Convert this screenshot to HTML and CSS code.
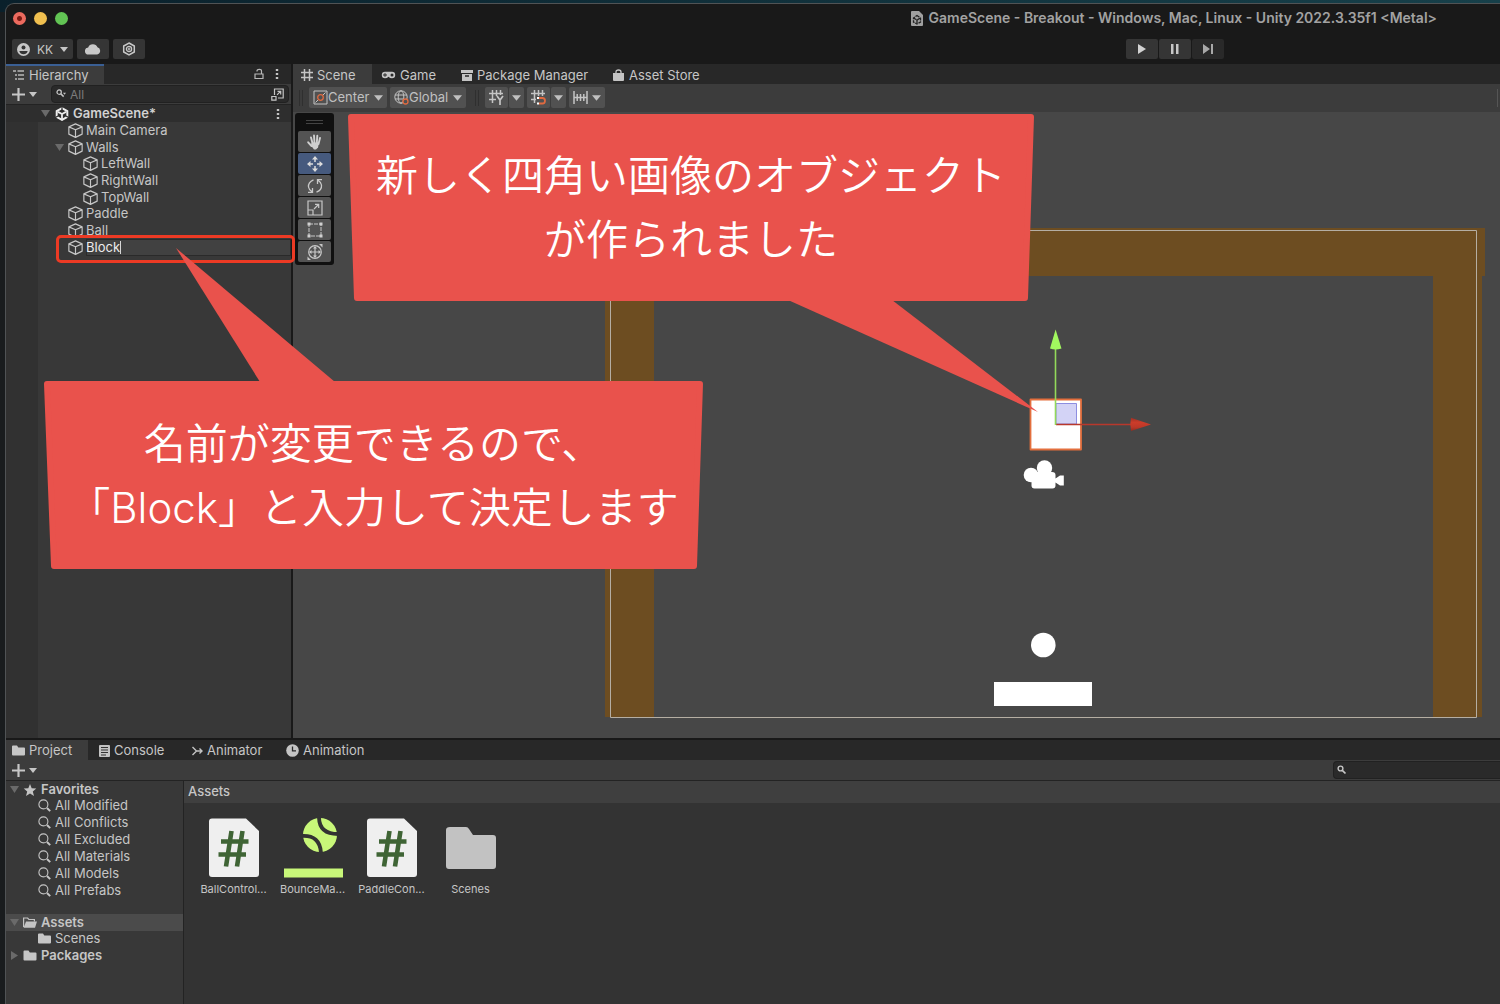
FILE: index.html
```html
<!DOCTYPE html>
<html lang="ja">
<head>
<meta charset="utf-8">
<meta name="viewport" content="width=device-width, initial-scale=1">
<title>GameScene - Breakout - Unity</title>
<link rel="stylesheet" href="styles.css">
</head>
<body>
<svg class="sprite" aria-hidden="true">
  <symbol id="caret" viewBox="0 0 8 5"><path d="M0 0h8L4 5z" fill="currentColor"/></symbol>
  <symbol id="cube" viewBox="0 0 14 14"><path d="M7 .8 13.200 3.600v6.800L7 13.400.8 10.400V3.600zM.8 3.600 7 6.300l6.200-2.700M7 6.300v7" fill="none" stroke="currentColor" stroke-width="1.100" stroke-linejoin="round"/></symbol>
  <symbol id="unity" viewBox="0 0 14 14"><path d="M7 1.200 12.300 4v6L7 12.900 1.700 10V4z" fill="none" stroke="currentColor" stroke-width="2"/><path d="M3 4.900 7 7l4-2.100M7 7v5" fill="none" stroke="currentColor" stroke-width="1.800"/><path d="M7 0v3.500M0 10.800l3-1.700M14 10.800l-3-1.700" stroke="#2e2e2e" stroke-width="1.200"/></symbol>
  <symbol id="plus" viewBox="0 0 12 12"><path d="M6 0v12M0 6h12" stroke="currentColor" stroke-width="2"/></symbol>
  <symbol id="dots" viewBox="0 0 4 12"><path d="M.8 1h2.400v2H.8zM.8 5h2.400v2H.8zM.8 9h2.400v2H.8z" fill="currentColor"/></symbol>
  <symbol id="search" viewBox="0 0 10 10"><circle cx="3.500" cy="3.500" r="2.400" fill="none" stroke="currentColor" stroke-width="1.400"/><path d="M5.300 5.300 8.500 8.500" stroke="currentColor" stroke-width="1.700"/></symbol>
  <symbol id="lens" viewBox="0 0 13 13"><circle cx="5.400" cy="5.400" r="4.500" fill="none" stroke="currentColor" stroke-width="1.100"/><path d="m9 9 3.200 3.200" stroke="currentColor" stroke-width="1.900"/></symbol>
  <symbol id="folder" viewBox="0 0 13 11"><path d="M0 1.500Q0 .5 1 .5h4l1.300 2H12q1 0 1 1v6q0 1-1 1H1q-1 0-1-1z" fill="currentColor"/></symbol>
  <symbol id="gridline" viewBox="0 0 12 12"><path d="M3.500 0v12M8.500 0v12M0 3.500h12M0 8.500h12" stroke="currentColor" stroke-width="1.500"/></symbol>
  <symbol id="script" viewBox="0 0 60 60"><path d="M8 .5h34L55 13v43q0 3-3 3H8q-3 0-3-3V3.500Q5 .5 8 .5z" fill="#efefef"/><path d="M27.500 13 22 48.500M38.500 13 33 48.500M17 23.500h27.500M14.500 36.500H42" stroke="#3f6435" stroke-width="4.600"/></symbol>
</svg>

<div class="desktop">
<div class="window">
  <header class="titlebar">
    <div class="lights">
      <button class="light light-close" aria-label="Close"></button>
      <button class="light light-min" aria-label="Minimize"></button>
      <button class="light light-max" aria-label="Zoom"></button>
    </div>
    <h1 class="title">
      <svg width="12" height="15" viewBox="0 0 12 15"><path d="M1 0h7l4 4v10q0 1-1 1H1q-1 0-1-1V1q0-1 1-1z" fill="#a0a0a0"/><path d="M6 4.500 9.500 7v4L6 13 2.500 11V7zM3 7.200 6 9l3-1.800M6 9v3.500" fill="none" stroke="#222" stroke-width="1.300" stroke-dasharray="3 .8"/></svg>
      <span>GameScene - Breakout - Windows, Mac, Linux - Unity 2022.3.35f1 &lt;Metal&gt;</span>
    </h1>
  </header>

  <div class="topbar">
    <div class="account">
      <button class="btn btn-user">
        <svg width="13" height="13" viewBox="0 0 13 13"><circle cx="6.500" cy="6.500" r="6.500" fill="#c8c8c8"/><circle cx="6.500" cy="4.500" r="2" fill="#353535"/><path d="M2.300 8h8.400q-1 3.200-4.200 3.200T2.300 8z" fill="#353535"/></svg>
        <span>KK</span>
        <svg width="8" height="5"><use href="#caret"/></svg>
      </button>
      <button class="btn btn-cloud" aria-label="Cloud"><svg width="16" height="12" viewBox="0 0 16 12"><path d="M3.700 11.500a3.500 3.500 0 0 1-.5-7A5 5 0 0 1 12.500 4.300a3.700 3.700 0 0 1-.4 7.200z" fill="#c8c8c8"/></svg></button>
      <button class="btn btn-hex" aria-label="Version control"><svg width="14" height="14" viewBox="0 0 14 14" fill="none" stroke="#c8c8c8"><path d="M7 1l5.300 3v6L7 13l-5.300-3V4z" stroke-width="1.500"/><circle cx="7" cy="7" r="2.600" stroke-width="1.300"/><path d="M6.400 6h1.300v2H6.400z" stroke-width=".8"/></svg></button>
    </div>
    <div class="playback">
      <button class="btn" aria-label="Play"><svg width="10" height="12"><path d="M1 1v10l8-5z" fill="#d2d2d2"/></svg></button>
      <button class="btn" aria-label="Pause"><svg width="10" height="12"><path d="M1 1h2.500v10H1zM6 1h2.500v10H6z" fill="#c8c8c8"/></svg></button>
      <button class="btn btn-dim" aria-label="Step"><svg width="11" height="12"><path d="M0 1v10l7-5zM8 1h2v10H8z" fill="#a8a8a8"/></svg></button>
    </div>
  </div>

  <main class="workspace">
    <section class="panel hierarchy">
      <nav class="tabs">
        <a href="#" class="tab tab-active tab-focus"><svg width="12" height="10" viewBox="0 0 12 10"><path d="M0 1h3M4.500 1H11M2 5h2M5 5h6M2 9h2M5 9h6" stroke="#b8b8b8" stroke-width="1.400"/></svg>Hierarchy</a>
        <span class="tab-tools">
          <svg width="10" height="12" viewBox="0 0 10 12"><path d="M1 6h8v4.500H1zM3 3.500V3q0-1.700 2.300-1.700T7.500 3v3" fill="none" stroke="#b8b8b8" stroke-width="1.200"/></svg>
          <svg class="soft" width="4" height="12"><use href="#dots"/></svg>
        </span>
      </nav>
      <div class="panelbar">
        <button class="add" aria-label="Create"><svg width="13" height="13"><use href="#plus"/></svg><svg width="8" height="5"><use href="#caret"/></svg></button>
        <label class="searchbox"><svg width="10" height="10" viewBox="0 0 10 10"><use href="#search" width="9" height="9"/><path d="M7 3.800h3l-1.500 2z" fill="currentColor"/></svg><input type="search" placeholder="All" aria-label="Search hierarchy"><svg class="popout" width="13" height="13" viewBox="0 0 13 13"><path d="M3.500 7V1h8.700v9H7M.8 8.500H5v3.700H.8zM6 6.800l3.500-3.500M6.500 3.300h3.200v3.200" fill="none" stroke="currentColor" stroke-width="1.200"/></svg></label>
      </div>
      <div class="tree-wrap">
        <div class="scene-row"><svg class="fold" width="9" height="7"><path d="M0 0h9L4.500 7z" fill="#6a6a6a"/></svg><svg class="bright" width="14" height="14"><use href="#unity"/></svg><b>GameScene*</b><svg class="soft push" width="4" height="12"><use href="#dots"/></svg></div>
        <ul class="tree">
          <li class="row"><svg class="cube"><use href="#cube"/></svg>Main Camera</li>
          <li class="row row-open"><svg class="fold" width="9" height="7"><path d="M0 0h9L4.500 7z" fill="#6a6a6a"/></svg><svg class="cube"><use href="#cube"/></svg>Walls</li>
          <li>
            <ul class="subtree">
              <li class="row"><svg class="cube"><use href="#cube"/></svg>LeftWall</li>
              <li class="row"><svg class="cube"><use href="#cube"/></svg>RightWall</li>
              <li class="row"><svg class="cube"><use href="#cube"/></svg>TopWall</li>
            </ul>
          </li>
          <li class="row"><svg class="cube"><use href="#cube"/></svg>Paddle</li>
          <li class="row"><svg class="cube"><use href="#cube"/></svg>Ball</li>
          <li class="row row-edit"><svg class="cube"><use href="#cube"/></svg><span class="rename"><input type="text" value="Block" aria-label="Object name"><i class="cursor"></i></span></li>
        </ul>
      </div>
    </section>

    <section class="panel scene">
      <nav class="tabs">
        <a href="#" class="tab tab-active tab-scene"><svg width="12" height="12"><use href="#gridline"/></svg>Scene</a>
        <a href="#" class="tab tab-game"><svg width="15" height="8" viewBox="0 0 15 8"><path d="M4 .8h7a3.200 3.200 0 0 1 0 6.400q-2 0-3.500-1.500Q6 7.200 4 7.200A3.200 3.200 0 0 1 4 .8z" fill="#c4c4c4"/><path d="M2 4h4M4 2.200v3.600" stroke="#282828"/><circle cx="11" cy="4" r="1.500" fill="#282828"/></svg>Game</a>
        <a href="#" class="tab tab-package"><svg width="12" height="11" viewBox="0 0 12 11"><path d="M0 0h12v3H0zM1 4h10v7H1z" fill="#c4c4c4"/><path d="M4 6h4" stroke="#282828" stroke-width="1.400"/></svg>Package Manager</a>
        <a href="#" class="tab tab-store"><svg width="11" height="12" viewBox="0 0 11 12"><path d="M0 4h11v7q0 1-1 1H1q-1 0-1-1z" fill="#c4c4c4"/><path d="M3 6V3q0-2 2.500-2T8 3v3" fill="none" stroke="#c4c4c4" stroke-width="1.300"/></svg>Asset Store</a>
      </nav>
      <div class="scenebar">
        <i class="grip"></i>
        <button class="tool tool-center"><svg width="15" height="15" viewBox="0 0 15 15" fill="none"><path d="M1 1h13v13H1z" stroke="#c4c4c4"/><path d="m2.500 12.500 3-3M9.500 5.500l3-3" stroke="#c4c4c4"/><circle cx="7.500" cy="7.500" r="2.800" stroke="#e06a40" stroke-width="1.300"/></svg>Center<svg class="end" width="9" height="6"><use href="#caret"/></svg></button>
        <button class="tool tool-global"><svg width="15" height="15" viewBox="0 0 15 15" fill="none" stroke="#c4c4c4"><circle cx="7" cy="7" r="6.200"/><ellipse cx="7" cy="7" rx="2.800" ry="6.200"/><path d="M1 5h12M1 9h8"/><circle cx="11.500" cy="11.500" r="2.500" fill="#515151" stroke="#e06a40" stroke-width="1.300"/></svg>Global<svg class="end" width="9" height="6"><use href="#caret"/></svg></button>
        <i class="grip"></i>
        <span class="split"><button class="tool" aria-label="Grid"><svg width="15" height="15" viewBox="0 0 15 15" fill="none" stroke="#c4c4c4"><path d="M3.500 0v13M7.500 0v6M11.500 0v5M0 3.500h14M0 9.500h7" stroke-width="1.500"/><path d="m8 6 3 4 3-4M11 10v5" stroke-width="1.700"/></svg></button><button class="tool" aria-label="Grid options"><svg width="9" height="6"><use href="#caret"/></svg></button></span>
        <span class="split"><button class="tool" aria-label="Snap"><svg width="15" height="15" viewBox="0 0 15 15" fill="none" stroke="#c4c4c4"><path d="M3.500 0v13M7.500 0v6M11.500 0v6M0 3.500h14M0 9.500h5" stroke-width="1.500"/><path d="M8 8h3.500q2.500 0 2.500 2.700t-2.500 2.800H8" stroke="#e06a40" stroke-width="1.800"/><path d="M6 8h2M6 13.500h2" stroke="#fff" stroke-width="1.800"/></svg></button><button class="tool" aria-label="Snap options"><svg width="9" height="6"><use href="#caret"/></svg></button></span>
        <button class="tool tool-inc" aria-label="Increment snapping"><svg width="15" height="13" viewBox="0 0 15 13" stroke="#c4c4c4"><path d="M1 0v13M14 0v13M4.200 3v7M7.500 3v7M10.800 3v7M1 6.500h13" stroke-width="1.500"/></svg><svg width="9" height="6"><use href="#caret"/></svg></button>
        <i class="edge"></i>
      </div>
      <div class="view">
        <svg class="canvas" viewBox="293 112 1207 626" preserveAspectRatio="xMidYMid slice">
          <defs><linearGradient id="cone" x1="0" y1="0" x2="0" y2="1"><stop offset="0" stop-color="#9c3024"/><stop offset=".35" stop-color="#cc3c2a"/><stop offset=".7" stop-color="#bd3828"/><stop offset="1" stop-color="#902c20"/></linearGradient></defs>
          <path d="M605 228h880v48H605zM605 276h49v441h-49zM1433 276h49v441h-49z" fill="#6d4d21"/>
          <path d="M610.500 230.500h866v487h-866z" fill="none" stroke="#b5aea3"/>
          <path d="M1030.500 399.500h50.500v50h-50.500z" fill="#fff" stroke="#e36f3d" stroke-width="1.800" stroke-linejoin="round"/>
          <path d="M1056 403.500h20.500V424H1056z" fill="#d3d3f6" stroke="#8d8de0"/>
          <path d="M1056 424.500h76" stroke="#b8382c" stroke-width="1.500"/>
          <path d="M1131 417.800q-1.500 6.700 0 13.200l20-6.500z" fill="url(#cone)"/>
          <path d="M1055.500 425v-78" stroke="#93d95a" stroke-width="1.600"/>
          <path d="M1050 348.500q5.500 2 11.500 0l-5.900-19z" fill="#a2f75f"/>
          <g fill="#fff"><circle cx="1031" cy="475" r="7.300"/><circle cx="1044.500" cy="468" r="7.700"/><path d="M1034 472h18q3.500 0 3.500 3v3.500l4.500-3h3.800v10h-3.800l-4.500-3v3q0 3-3 3h-18q-3 0-3-3v-10z"/></g>
          <circle cx="1043.300" cy="645" r="12.300" fill="#fff"/>
          <path d="M994 682h98v24h-98z" fill="#fff"/>
        </svg>
        <div class="palette">
          <i class="palette-grip"></i>
          <button class="ptool" aria-label="Hand"><svg width="16" height="16" viewBox="0 0 16 16" fill="none" stroke="#d0d0d0" stroke-linecap="round"><path d="M4 3.500 5.500 9M7 1.500 7.500 9M10.300 1.800 9.800 9M13 4l-1.500 6M1.200 8.300 4.500 12" stroke-width="1.900"/><path d="M4.500 8.500h7.500l-1 5-2 2H7l-3-4z" fill="#d0d0d0" stroke="none"/></svg></button>
          <button class="ptool ptool-on" aria-label="Move"><svg width="16" height="16" viewBox="0 0 16 16"><path d="M8 0l3 3.500H5zM8 16l3-3.500H5zM0 8l3.500-3v6zM16 8l-3.500-3v6z" fill="#dcdcdc"/><path d="M8 3v3M8 10v3M3 8h3M10 8h3" stroke="#dcdcdc" stroke-width="1.500"/></svg></button>
          <button class="ptool" aria-label="Rotate"><svg width="16" height="16" viewBox="0 0 16 16" fill="none" stroke="#c8c8c8" stroke-width="1.300"><path d="M6.500 1.800Q1 4 1.500 9q.5 3 3.500 4.800M1 14.300h4.500V10M9.500 14.200Q15 12 14.500 7q-.5-3-3.500-4.800M15 1.700h-4.500V6"/></svg></button>
          <button class="ptool" aria-label="Scale"><svg width="16" height="16" viewBox="0 0 16 16" fill="none" stroke="#c8c8c8" stroke-width="1.200"><path d="M1 1h14v14H1zM1 10h5v5M7 9l4.500-4.500M8 4.300h3.700V8"/></svg></button>
          <button class="ptool" aria-label="Rect"><svg width="16" height="16" viewBox="0 0 16 16"><path d="M2 2h12v12H2z" fill="none" stroke="#c8c8c8" stroke-dasharray="4 1"/><path d="M.5.5h3v3h-3zM12.500.5h3v3h-3zM.5 12.500h3v3h-3zM12.500 12.500h3v3h-3z" fill="#d0d0d0"/></svg></button>
          <button class="ptool" aria-label="Transform"><svg width="18" height="18" viewBox="0 0 18 18" fill="none" stroke="#c8c8c8"><circle cx="9" cy="9" r="6.300" stroke-width="1.200"/><path d="M9 4v10M4 9h10" stroke-width="1.200"/><path d="M9 3l2 2.500H7zM9 15l2-2.500H7zM3 9l2.500-2v4zM15 9l-2.500-2v4z" fill="#c8c8c8" stroke="none"/><path d="M13 1h3.500v3.500zM1.500 13.500V17H5z" fill="#c8c8c8" stroke="none"/></svg></button>
        </div>
      </div>
    </section>
  </main>

  <section class="panel project">
    <nav class="tabs">
      <a href="#" class="tab tab-active tab-project"><svg width="13" height="11"><use href="#folder"/></svg>Project</a>
      <a href="#" class="tab tab-console"><svg width="11" height="12" viewBox="0 0 11 12"><rect width="11" height="12" rx="1" fill="#c4c4c4"/><path d="M2 2.500h7M2 5h7M2 7.500h7M2 10h5" stroke="#333"/></svg>Console</a>
      <a href="#" class="tab tab-animator"><svg width="11" height="10" viewBox="0 0 11 10" fill="none" stroke="#c4c4c4" stroke-width="1.400"><path d="m.5 1 4 4-4 4M4 5h6M7.500 2.500 10 5 7.500 7.500"/></svg>Animator</a>
      <a href="#" class="tab tab-animation"><svg width="13" height="13" viewBox="0 0 13 13"><circle cx="6.500" cy="6.500" r="6.300" fill="#c4c4c4"/><path d="M6.500 2.500v4.300H10" fill="none" stroke="#282828" stroke-width="1.300"/></svg>Animation</a>
    </nav>
    <div class="panelbar">
      <button class="add" aria-label="Create asset"><svg width="13" height="13"><use href="#plus"/></svg><svg width="8" height="5"><use href="#caret"/></svg></button>
      <label class="searchbox searchbox-project"><svg width="10" height="10"><use href="#search"/></svg><input type="search" aria-label="Search project"></label>
    </div>
    <div class="browser">
      <aside class="folders">
        <div class="frow frow-root"><svg width="9" height="7"><path d="M0 0h9L4.500 7z" fill="#6a6a6a"/></svg><svg class="ficon" width="13" height="12" viewBox="0 0 13 12"><path d="M6.500 0l1.700 4.200 4.600.3-3.500 2.900 1.200 4.500-4-2.500-4 2.500 1.200-4.500L.2 4.500l4.600-.3z" fill="#c4c4c4"/></svg><b>Favorites</b></div>
        <ul class="fsub">
          <li class="frow"><svg width="13" height="13"><use href="#lens"/></svg>All Modified</li>
          <li class="frow"><svg width="13" height="13"><use href="#lens"/></svg>All Conflicts</li>
          <li class="frow"><svg width="13" height="13"><use href="#lens"/></svg>All Excluded</li>
          <li class="frow"><svg width="13" height="13"><use href="#lens"/></svg>All Materials</li>
          <li class="frow"><svg width="13" height="13"><use href="#lens"/></svg>All Models</li>
          <li class="frow"><svg width="13" height="13"><use href="#lens"/></svg>All Prefabs</li>
        </ul>
        <div class="frow frow-root frow-on"><svg width="9" height="7"><path d="M0 0h9L4.500 7z" fill="#6a6a6a"/></svg><svg class="ficon" width="14" height="11" viewBox="0 0 14 11"><path d="M.6 10V1h4l1.300 1.500h5.500V4.500" fill="none" stroke="#c4c4c4" stroke-width="1.200"/><path d="M3 4.500h11L12 10.700H.6z" fill="#c4c4c4"/></svg><b>Assets</b></div>
        <ul class="fsub">
          <li class="frow"><svg width="13" height="11"><use href="#folder"/></svg>Scenes</li>
        </ul>
        <div class="frow frow-root"><svg width="9" height="9"><path d="M1 0v9l7-4.500z" fill="#6a6a6a"/></svg><svg class="ficon" width="13" height="11"><use href="#folder"/></svg><b>Packages</b></div>
      </aside>
      <div class="assets">
        <h2 class="crumb">Assets</h2>
        <ul class="asset-grid">
          <li class="asset"><svg width="60" height="60"><use href="#script"/></svg>BallControl...</li>
          <li class="asset"><svg width="60" height="60" viewBox="0 0 60 60"><circle cx="37" cy="17" r="17" fill="#c8f779"/><path d="M36 -1q0 17 19 17M19 18q18-1 19 17" fill="none" stroke="#333" stroke-width="3.800"/><path d="M1 50.500h59v9H1z" fill="#c8f779"/></svg>BounceMa...</li>
          <li class="asset"><svg width="60" height="60"><use href="#script"/></svg>PaddleCon...</li>
          <li class="asset"><svg width="60" height="60" viewBox="0 0 60 60"><path d="M9 9h16q2 0 3 2l4 6h20q3 0 3 3v28q0 3-3 3H8q-3 0-3-3V12q0-3 4-3z" fill="#c2c2c2"/></svg>Scenes</li>
        </ul>
      </div>
    </div>
  </section>
</div>
</div>

<div class="highlight"></div>
<div class="callout callout-top">
  <svg width="700" height="310" viewBox="0 0 700 310"><path d="M3 3h680l-6 181H9z" stroke="#e9524c" stroke-width="6" stroke-linejoin="round"/><path d="M440 186h104l146 112z"/></svg>
  <p>新しく四角い画像のオブジェクト<br>が作られました</p>
</div>
<div class="callout callout-bottom">
  <svg width="660" height="189" viewBox="0 0 660 189"><path d="M3 3h653l-6 182H10z" stroke="#e9524c" stroke-width="6" stroke-linejoin="round"/><path d="M216 1h75L132-133z"/></svg>
  <p>名前が変更できるので、<br>「<span class="latin">Block</span>」と入力して決定します</p>
</div>
</body>
</html>
```
FILE: styles.css
```css
* { box-sizing: border-box; }
body {
  margin: 0;
  background: #191c1e;
  color: #c6c6c6;
  font: 13px/17px Inter, "Liberation Sans", sans-serif;
  overflow-x: hidden;
}
ul { list-style: none; margin: 0; padding: 0; }
button, input { font: inherit; color: inherit; border: 0; padding: 0; margin: 0; background: none; }
button { display: flex; align-items: center; justify-content: center; }
input { min-width: 0; outline: 0; }
a { color: inherit; text-decoration: none; }
svg { flex: none; display: block; }
.sprite { position: absolute; width: 0; height: 0; }

.desktop {
  min-height: 100vh;
  padding: 3px 0 0 5px;
  display: flex;
  background: linear-gradient(90deg, #0a202b, #17404a) top / 100% 12px no-repeat #191c1e;
}
.window {
  flex: 1;
  min-width: 0;
  display: flex;
  flex-direction: column;
  border: solid #505355;
  border-width: 1px 0 0 1px;
  border-top-left-radius: 9px;
  background: #191919;
  overflow: hidden;
}

/* Title bar and main toolbar */
.titlebar { display: flex; align-items: center; height: 28px; padding: 0 63px 0 7px; }
.lights { display: flex; gap: 8px; }
.light { width: 13px; height: 13px; border-radius: 50%; }
.light-close { background: radial-gradient(circle, #7c1a12 2px, #ec6a5e 3px); }
.light-min { background: #f0bf4f; }
.light-max { background: #62c454; }
.title { display: flex; gap: 6px; align-items: center; margin: 0 0 0 auto; font-size: 14px; line-height: 18px; font-weight: 600; color: #a2a2a2; white-space: nowrap; }

.topbar { display: flex; justify-content: space-between; height: 32px; padding: 7px 276px 5px 6px; }
.account { display: flex; gap: 4px; }
.btn { height: 20px; background: #353535; border-radius: 2px; }
.btn-user { width: 61px; gap: 7px; font-size: 12px; }
.btn-cloud { width: 32px; }
.btn-hex { width: 32px; }
.playback { display: flex; gap: 1px; }
.playback .btn { width: 32px; }
.playback .btn-dim { background: #292929; }

/* Shared panel chrome */
.workspace { flex: 1; display: grid; grid-template-columns: 285px minmax(0, 1fr); gap: 2px; }
.panel { display: flex; flex-direction: column; min-width: 0; background: #383838; }
.tabs { display: flex; height: 20px; background: #282828; }
.tab { display: flex; align-items: center; gap: 4px; padding: 2px 0 0; white-space: nowrap; }
.tab-active { background: #3c3c3c; }
.tab-focus { width: 98px; padding-left: 7px; box-shadow: inset 0 2px #3a5f94; }
.tab-tools { display: flex; align-items: center; gap: 11px; margin-left: auto; padding-right: 12px; }
.soft { color: #c4c4c4; }
.panelbar { display: flex; align-items: center; height: 20px; background: #3c3c3c; }
.add { gap: 4px; padding-left: 6px; }
.searchbox {
  display: flex;
  align-items: center;
  height: 18px;
  margin-left: auto;
  padding-left: 4px;
  gap: 4px;
  background: #2a2a2a;
  border: 1px solid #212121;
  border-radius: 4px;
  font-size: 12px;
}
.searchbox input { flex: 1; appearance: none; }
.searchbox input::placeholder { color: #7c7c7c; }
.hierarchy .searchbox { width: 238px; margin-right: 2px; }
.popout { margin-right: 4px; }

/* Hierarchy tree */
.tree-wrap { flex: 1; background: linear-gradient(90deg, #313131 32px, #383838 32px); border-top: 1px solid #232323; }
.scene-row { display: flex; align-items: center; height: 17px; padding: 0 11px 0 35px; background: #2e2e2e; color: #d2d2d2; }
.scene-row .fold { margin-right: 5px; }
.scene-row b { margin-left: 4px; font-weight: 600; }
.bright { color: #ededed; }
.push { margin-left: auto; }
.row { display: flex; align-items: center; height: 17px; padding-left: 62px; }
.row-open { padding-left: 49px; }
.row-open .fold { margin-right: 4px; }
.cube { width: 15px; height: 15px; margin-right: 3px; }
.subtree { margin: -1px 0; }
.subtree .row { padding-left: 77px; }
.rename { flex: 1; display: flex; align-items: center; height: 17px; background: #414141; box-shadow: inset 0 0 0 1px #2a2a2a; }
.rename input { width: 34px; height: 17px; color: #ececec; }
.cursor { width: 1px; height: 13px; background: #d6d6d6; }

/* Scene panel */
.tab-scene { width: 79px; padding-left: 8px; }
.tab-game { width: 80px; padding-left: 9px; }
.tab-package { width: 152px; padding-left: 9px; }
.tab-store { padding-left: 9px; gap: 5px; }
.scenebar { display: flex; align-items: center; height: 28px; padding: 0 0 1px 6px; background: #3c3c3c; color: #c0c0c0; }
.grip { width: 4px; height: 16px; border: solid #2f2f2f; border-width: 0 1px; margin-right: 6px; }
.tool { height: 21px; padding: 0 4px; background: #515151; border-radius: 2px; }
.tool .end { margin-left: auto; }
.tool-center { width: 78px; margin-right: 3px; }
.tool-global { width: 76px; margin-right: 9px; }
.split { display: flex; gap: 1px; margin-right: 3px; }
.split .tool + .tool { padding: 0 3px; }
.tool-inc { gap: 4px; }
.edge { width: 1px; height: 18px; margin: 0 2px 0 auto; background: #555; }
.view { position: relative; flex: 1; background: #474747; overflow: hidden; }
.canvas { position: absolute; inset: 0; width: 100%; height: 100%; }
.palette {
  position: absolute;
  left: 2px;
  top: 1px;
  display: flex;
  flex-direction: column;
  gap: 1px;
  width: 39px;
  padding: 0 3px 3px;
  background: #101010;
  border-radius: 3px;
}
.palette-grip { height: 4px; margin: 7px 8px 6px; border: solid #444; border-width: 1px 0; }
.ptool { height: 21px; background: #535353; border-radius: 2px; }
.ptool-on { background: #465a7e; }

/* Project panel */
.project { flex: 0 0 266px; border-top: 2px solid #191919; }
.project .tab { padding-top: 1px; }
.tab-project { width: 82px; padding-left: 6px; }
.tab-console { width: 94px; padding-left: 11px; }
.tab-animator { width: 93px; padding-left: 10px; }
.tab-animation { padding-left: 11px; }
.searchbox-project { width: 167px; padding-left: 3px; border-right: 0; border-radius: 4px 0 0 4px; }
.browser { flex: 1; display: grid; grid-template-columns: 178px minmax(0, 1fr); border-top: 1px solid #232323; }
.folders { border-right: 1px solid #232323; }
.frow { display: flex; align-items: center; gap: 4px; height: 17px; }
.frow b { font-weight: 600; }
.frow-root { padding-left: 4px; }
.frow-root .ficon { width: 14px; }
.frow-on { background: #4b4b4b; }
.fsub { margin: -1px 0 0; padding-left: 32px; }
.fsub + .frow-on { margin-top: 15px; }
.assets { background: #333; }
.crumb { margin: 0; height: 22px; padding: 2px 4px; background: #3f3f3f; font-size: 13px; line-height: 17px; font-weight: 500; }
.asset-grid { display: grid; grid-template-columns: repeat(auto-fill, 79px); padding: 15px 0 0 10px; }
.asset { display: flex; flex-direction: column; align-items: center; gap: 3px; font-size: 11px; line-height: 16px; white-space: nowrap; }

/* Annotations over the editor */
.highlight { position: absolute; left: 56px; top: 235px; width: 239px; height: 28px; border: 3px solid #ec3a24; border-radius: 5px; }
.callout { position: absolute; display: grid; place-items: center; padding-bottom: 5px; color: #fff; }
.callout svg { position: absolute; left: 0; top: 0; overflow: visible; fill: #e9524c; }
.callout p { position: relative; margin: 0; font: 350 42px/64px "Noto Sans CJK JP DemiLight", "Noto Sans CJK JP", sans-serif; text-align: center; white-space: nowrap; }
.latin { font-family: Inter, sans-serif; font-size: 42px; font-weight: 300; line-height: 1; }
.callout-top { left: 348px; top: 114px; width: 686px; height: 187px; }
.callout-bottom { left: 44px; top: 381px; width: 659px; height: 188px; }
```
